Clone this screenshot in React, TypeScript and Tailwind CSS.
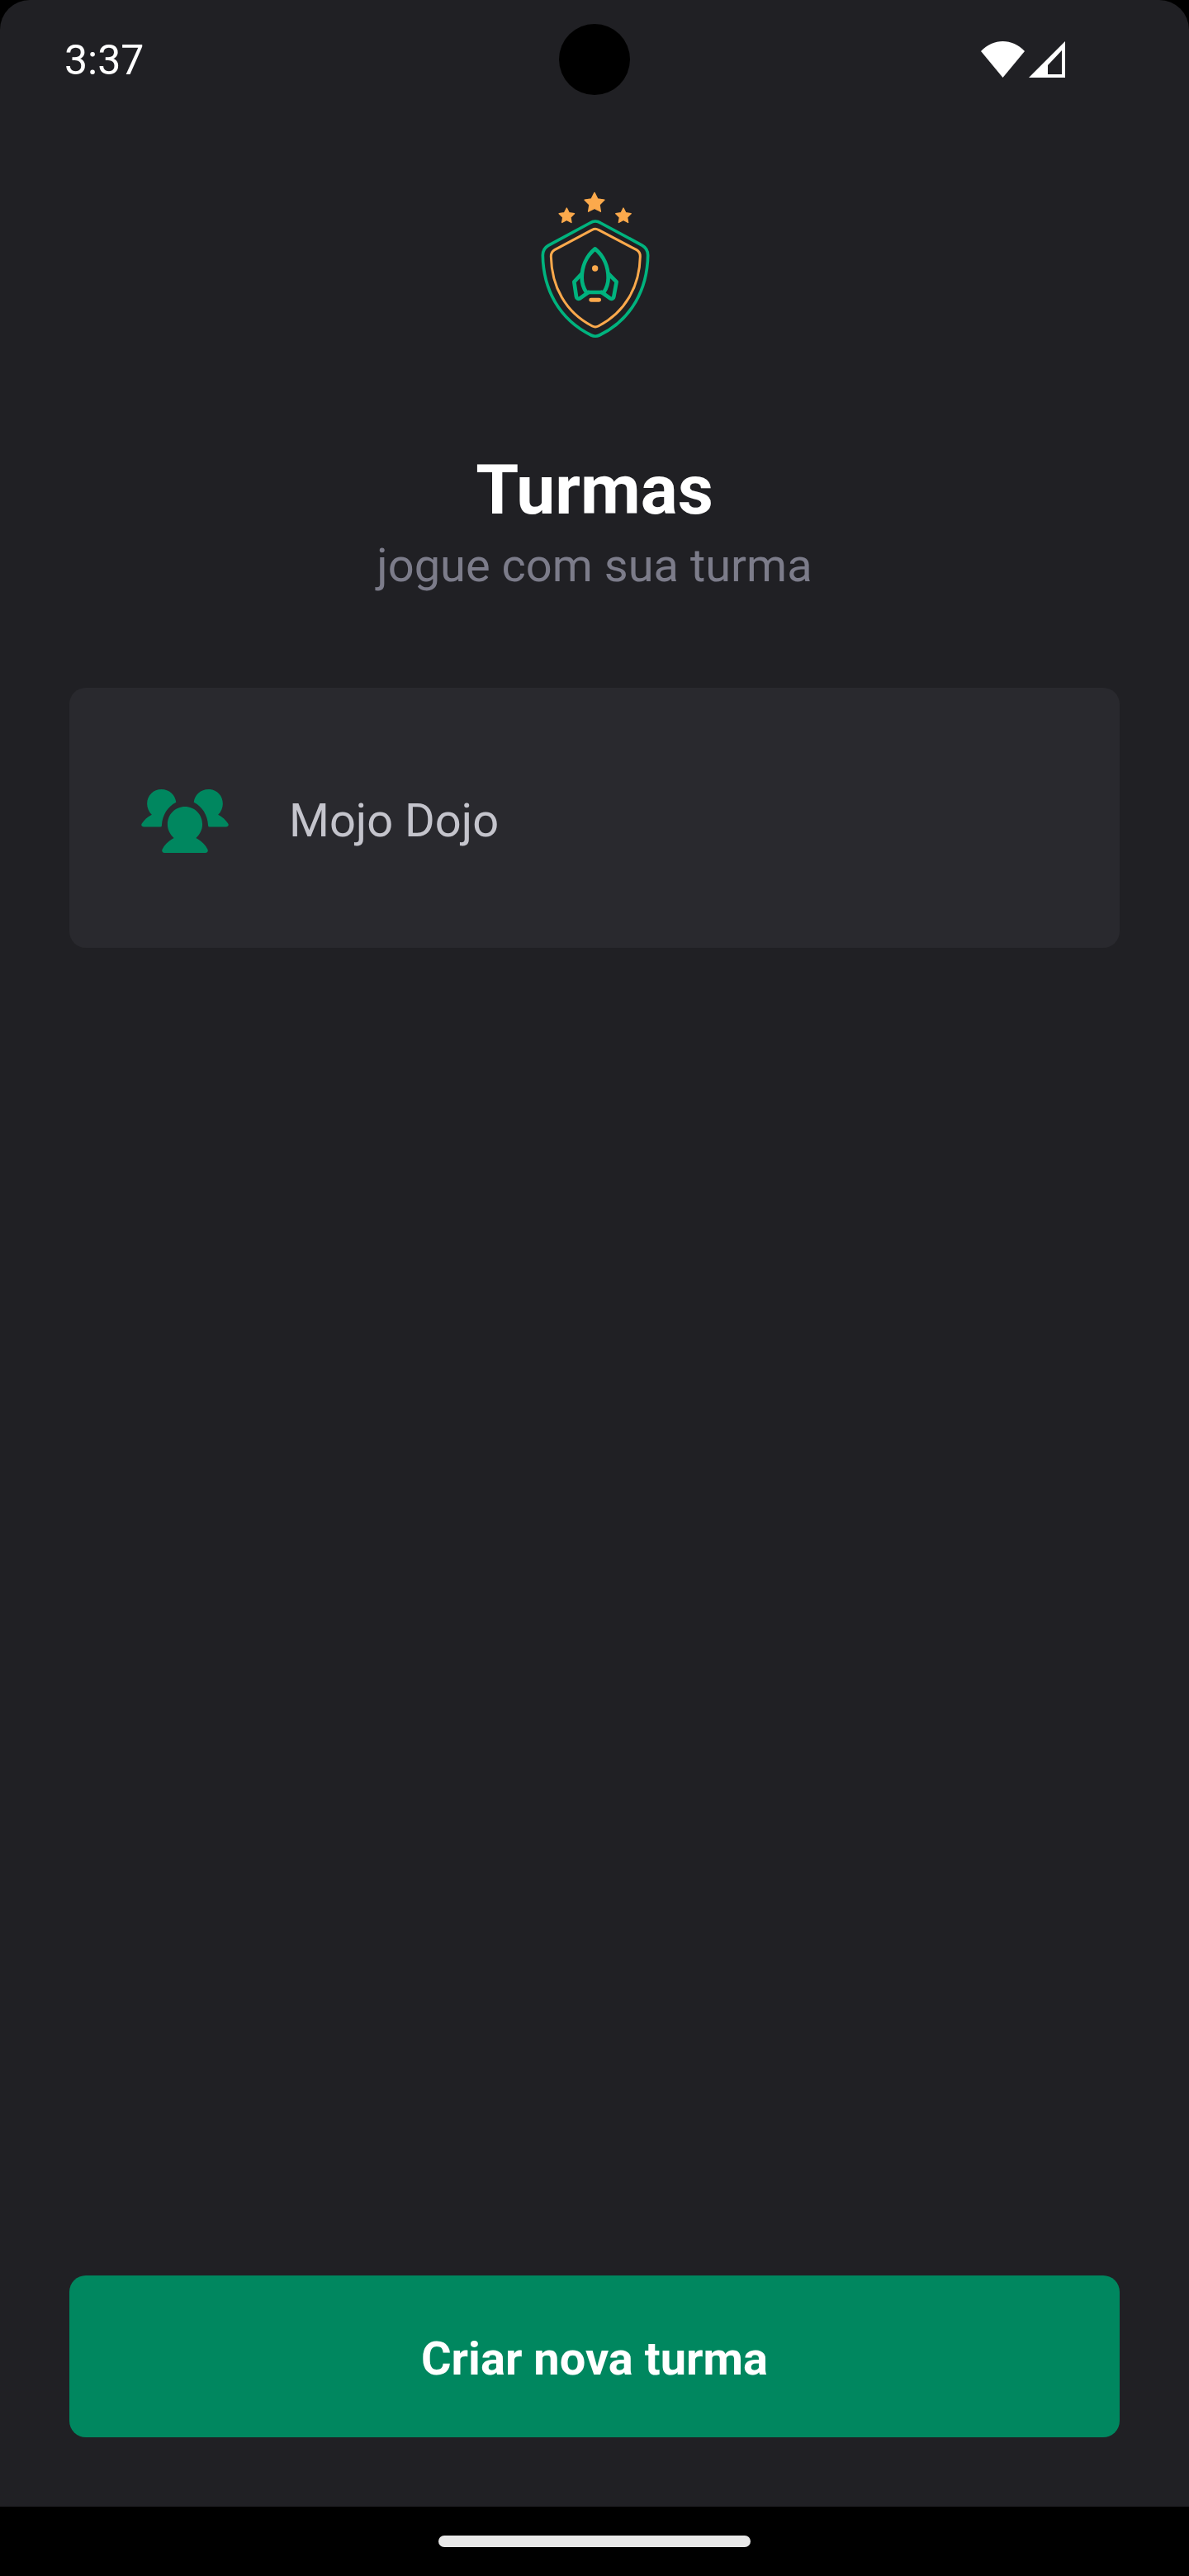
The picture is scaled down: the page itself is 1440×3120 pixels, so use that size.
const ROCKET_GREEN = "#00B37E";
const STAR_ORANGE = "#FBA94C";

function Star({ x, y, r }: { x: number; y: number; r: number }) {
  const pts = Array.from({ length: 10 }, (_, i) => {
    const a = (-90 + i * 36) * (Math.PI / 180);
    const rad = i % 2 === 0 ? r : r * 0.5;
    return `${(x + rad * Math.cos(a)).toFixed(1)},${(y + rad * Math.sin(a)).toFixed(1)}`;
  }).join(" ");
  return <polygon points={pts} fill={STAR_ORANGE} stroke={STAR_ORANGE} strokeWidth="4" strokeLinejoin="round" />;
}

function Logo() {
  return (
    <svg viewBox="0 0 600 630" className="h-[210px] w-[200px]" fill="none">
      <Star x={300} y={108} r={38} />
      <Star x={199} y={155} r={29} />
      <Star x={405} y={155} r={29} />
      <path
        d="M303 174 C296 174 290 176 284 180 L132 262 C118 270 112 282 112 298 C114 420 170 530 288 588 C298 593 308 593 318 588 C436 530 492 420 494 298 C494 282 488 270 474 262 L322 180 C316 176 310 174 303 174 Z"
        stroke={ROCKET_GREEN}
        strokeWidth="11"
      />
      <path
        d="M303 202 C298 202 294 204 290 206 L155 278 C146 283 142 292 142 302 C144 410 194 505 292 555 C300 559 306 559 314 555 C412 505 464 410 466 302 C466 292 462 283 453 278 L316 206 C312 204 308 202 303 202 Z"
        stroke={STAR_ORANGE}
        strokeWidth="9"
      />
      <path
        d="M302 274 C270 300 254 340 254 380 C254 398 260 416 270 432 L334 432 C344 416 350 398 350 380 C350 340 334 300 302 274 Z"
        stroke={ROCKET_GREEN}
        strokeWidth="14"
        strokeLinejoin="round"
      />
      <path
        d="M252 366 L226 394 L234 448 C235 455 241 457 247 454 L278 432"
        stroke={ROCKET_GREEN}
        strokeWidth="14"
        strokeLinejoin="round"
        strokeLinecap="round"
      />
      <path
        d="M352 366 L380 394 L370 448 C369 455 363 457 357 454 L326 432"
        stroke={ROCKET_GREEN}
        strokeWidth="14"
        strokeLinejoin="round"
        strokeLinecap="round"
      />
      <circle cx="302" cy="345" r="11" fill={STAR_ORANGE} />
      <rect x="280" y="452" width="44" height="15" rx="7" fill={STAR_ORANGE} />
    </svg>
  );
}

function PeopleIcon() {
  return (
    <svg viewBox="64 78 316 230" className="h-[77px] w-[106px]" fill="#00875F">
      <path d="M137 78 C165 78 187 98 190 125 C160 140 140 170 138 210 Q138 214 133 214 L74 214 C66 214 62 208 66 202 C74 190 86 178 102 170 C91 159 85 144 85 130 C85 100 108 78 137 78 Z" />
      <path d="M307 78 C279 78 257 98 254 125 C284 140 304 170 306 210 Q306 214 311 214 L370 214 C378 214 382 208 378 202 C370 190 358 178 342 170 C353 159 359 144 359 130 C359 100 336 78 307 78 Z" />
      <path d="M222 141 C257 141 285 169 285 205 C285 224 276 241 262 254 C281 264 296 278 304 295 C307 302 303 308 296 308 L148 308 C141 308 137 302 140 295 C148 278 163 264 182 254 C168 241 159 224 159 205 C159 169 187 141 222 141 Z" />
    </svg>
  );
}

function StatusBar() {
  return (
    <div className="relative flex h-[144px] shrink-0 items-start justify-between pl-[78px] pr-[150px] pt-[46px]">
      <span className="text-[50px] leading-[55px] text-white">3:37</span>
      <div className="absolute left-[677px] top-[29px] h-[86px] w-[86px] rounded-full bg-black" />
      <div className="mt-[4px] flex items-start gap-[5px]">
        <svg viewBox="0 0 53 44" className="h-[44px] w-[53px]" fill="#fff">
          <path d="M0 12 C15 -4 38 -4 53 12 L26.5 44 Z" />
        </svg>
        <svg viewBox="0 0 44 44" className="h-[44px] w-[44px]" fill="#fff">
          <path fillRule="evenodd" d="M44 0 L44 44 L0 44 Z M40 11 L23 29 L23 40 L40 40 Z" />
        </svg>
      </div>
    </div>
  );
}

export default function App() {
  return (
    <div className="flex h-[3120px] w-[1440px] flex-col bg-black font-['Roboto',sans-serif]">
      <div className="flex flex-1 flex-col rounded-t-[36px] bg-[#202024]">
        <StatusBar />
        <main className="flex flex-1 flex-col px-[84px]">
          <div className="mt-[66px] flex justify-center">
            <Logo />
          </div>
          <h1 className="mt-[128px] text-center text-[84px] font-bold leading-[92px] text-white">Turmas</h1>
          <p className="mt-[12px] text-center text-[56px] leading-[66px] text-[#7C7C8A]">jogue com sua turma</p>
          <button className="mt-[115px] flex h-[315px] items-center rounded-[20px] bg-[#29292E] pl-[87px] pt-[7px] text-left">
            <PeopleIcon />
            <span className="ml-[73px] text-[56px] leading-[66px] text-[#C4C4CC]">Mojo Dojo</span>
          </button>
          <button className="mt-auto mb-[84px] h-[196px] rounded-[20px] bg-[#00875F] pt-[6px] text-[56px] font-bold text-white">
            Criar nova turma
          </button>
        </main>
      </div>
      <div className="flex h-[84px] shrink-0 justify-center bg-black pt-[35px]">
        <div className="h-[14px] w-[378px] rounded-full bg-[#E8E8E8]" />
      </div>
    </div>
  );
}
